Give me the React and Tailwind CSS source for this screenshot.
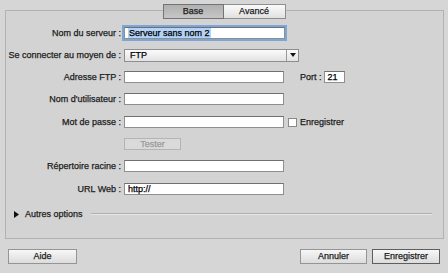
const font = { fontFamily: '"Liberation Sans", Arial, sans-serif' };

function Field({ w = "w-[160px]", children, focus = false }) {
  return (
    <div
      className={`${w} h-[12px] bg-white border border-[#8f8f8f] border-t-[#707070] flex items-center pl-[3px] text-[9px] leading-none text-black ${
        focus ? "outline outline-2 outline-[#7da6d8]" : ""
      }`}
    >
      {children}
    </div>
  );
}

function Row({ label, top, children }) {
  return (
    <div className={`flex items-center h-[12px] ${top}`}>
      <div className="w-[118px] shrink-0 whitespace-nowrap text-right text-[9px] leading-none text-[#1c1c1c] pr-[3px]">
        {label}
      </div>
      {children}
    </div>
  );
}

function Btn({ w, children, def = false }) {
  return (
    <div
      className={`${w} h-[15px] flex items-center justify-center text-[9px] leading-none text-[#1c1c1c] bg-gradient-to-b from-[#f7f7f7] to-[#dcdcdc] border ${
        def ? "border-[#5e5e5e]" : "border-[#959595]"
      }`}
    >
      {children}
    </div>
  );
}

export default function App() {
  return (
    <div
      className="w-[448px] h-[273px] bg-[#d6d6d6] pt-[10px] overflow-hidden [-webkit-text-stroke:0.25px_currentColor]"
      style={font}
    >
      {/* panneau principal */}
      <div className="ml-[5px] w-[439px] h-[229px] border border-[#b2b2b2] bg-[#d3d3d3]">
        {/* onglets */}
        <div className="flex justify-center -mt-[7px] ml-[-1px]">
          <div className="w-[61px] h-[15px] flex items-center justify-center text-[9px] leading-none text-[#1c1c1c] bg-gradient-to-b from-[#b0b0b0] to-[#c6c6c6] border border-[#747474]">
            Base
          </div>
          <div className="w-[62px] h-[15px] flex items-center justify-center text-[9px] leading-none text-[#1c1c1c] bg-gradient-to-b from-[#fafafa] to-[#e1e1e1] border border-l-0 border-[#8e8e8e]">
            Avancé
          </div>
        </div>

        <div className="flex flex-col">
          <Row label="Nom du serveur :" top="mt-[8px]">
            <Field w="w-[161px]" focus>
              <span className="bg-[#b5d3f7] h-[10px] flex items-center px-[1px]">Serveur sans nom 2</span>
            </Field>
          </Row>

          <Row label="Se connecter au moyen de :" top="mt-[10px]">
            <div className="w-[175px] h-[13px] flex border border-[#8e8e8e] bg-gradient-to-b from-[#fbfbfb] to-[#e2e2e2]">
              <div className="flex-1 flex items-center pl-[5px] text-[9px] leading-none text-black border-r border-[#9a9a9a]">
                FTP
              </div>
              <div className="w-[11px] flex items-center justify-center">
                <svg width="6" height="4" viewBox="0 0 6 4">
                  <path d="M0 0H6L3 4Z" fill="#111" />
                </svg>
              </div>
            </div>
          </Row>

          <Row label="Adresse FTP :" top="mt-[10px]">
            <Field />
            <span className="ml-[16px] text-[9px] leading-none text-[#1c1c1c]">Port :</span>
            <div className="ml-[2px]">
              <Field w="w-[21px]">21</Field>
            </div>
          </Row>

          <Row label="Nom d'utilisateur :" top="mt-[10px]">
            <Field />
          </Row>

          <Row label="Mot de passe :" top="mt-[11px]">
            <Field />
            <div className="ml-[4px] w-[9px] h-[9px] bg-white border border-[#8a8a8a]" />
            <span className="ml-[3px] text-[9px] leading-none text-[#1c1c1c]">Enregistrer</span>
          </Row>

          <div className="flex h-[12px] mt-[10px]">
            <div className="w-[118px] shrink-0" />
            <div className="w-[57px] h-[12px] flex items-center justify-center text-[9px] leading-none text-[#9a9a9a] bg-[#dadada] border border-[#b4b4b4]">
              Tester
            </div>
          </div>

          <Row label="Répertoire racine :" top="mt-[10px]">
            <Field />
          </Row>

          <Row label="URL Web :" top="mt-[11px]">
            <Field>http://</Field>
          </Row>

          <div className="flex items-center mt-[13px] h-[12px]">
            <svg className="ml-[8px]" width="5" height="7" viewBox="0 0 5 7">
              <path d="M0 0L5 3.5L0 7Z" fill="#111" />
            </svg>
            <span className="ml-[6px] text-[9px] leading-none text-[#1c1c1c]">Autres options</span>
            <div className="ml-[8px] w-[341px] h-[2px] border-t border-[#b0b0b0] border-b border-b-[#e6e6e6]" />
          </div>
        </div>
      </div>

      {/* boutons du bas */}
      <div className="flex mt-[10px] px-[8px]">
        <Btn w="w-[69px]">Aide</Btn>
        <div className="flex-1" />
        <Btn w="w-[67px]">Annuler</Btn>
        <div className="w-[5px]" />
        <Btn w="w-[68px]" def>
          Enregistrer
        </Btn>
      </div>
    </div>
  );
}
